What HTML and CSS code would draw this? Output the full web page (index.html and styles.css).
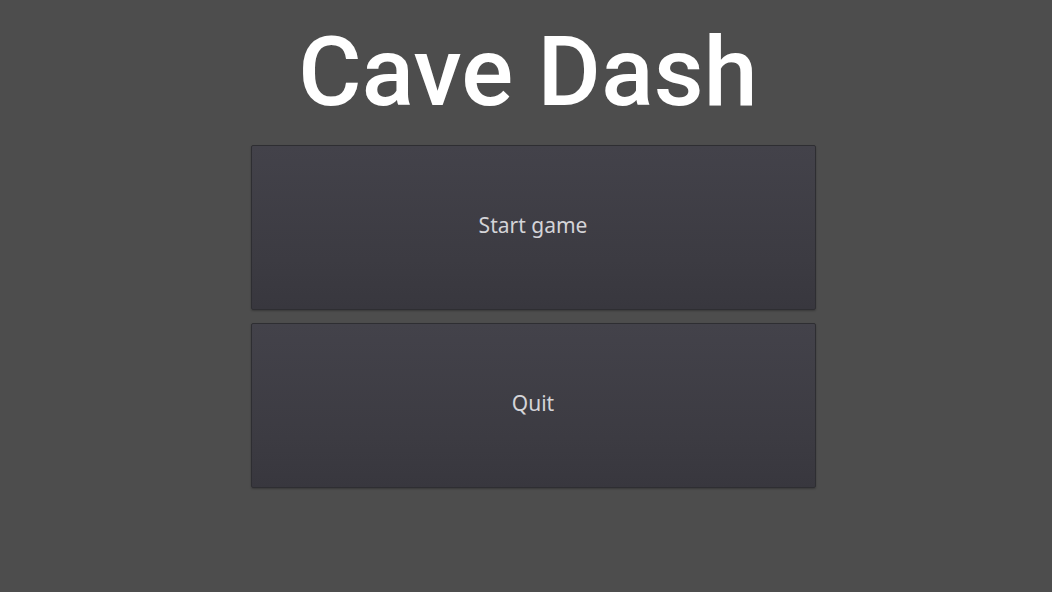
FILE: index.html
```html
<!DOCTYPE html>
<html>
<head>
<meta charset="utf-8">
<link rel="stylesheet" href="styles.css">
</head>
<body>
<main class="menu">
  <h1 class="title">Cave Dash</h1>
  <div class="buttons">
    <button class="btn">Start game</button>
    <button class="btn">Quit</button>
  </div>
</main>
</body>
</html>
```
FILE: styles.css
```css
html, body {
  margin: 0;
  padding: 0;
  width: 1052px;
  height: 592px;
  background: #4d4d4d;
  overflow: hidden;
}
.menu {
  display: flex;
  flex-direction: column;
  align-items: center;
  padding-left: 14px;
}
.title {
  margin: 15px 0 0 -10px;
  font-family: Roboto, "Liberation Sans", sans-serif;
  font-weight: 500;
  font-size: 97px;
  line-height: 114px;
  color: #ffffff;
  letter-spacing: 0.2px;
}
.buttons {
  display: flex;
  flex-direction: column;
  gap: 13px;
  margin-top: 16px;
}
.btn {
  width: 565px;
  height: 165px;
  box-sizing: border-box;
  border: 1px solid #2e2e32;
  border-radius: 2px;
  background: linear-gradient(#43424a, #3c3b42 70%, #38373e);
  box-shadow: 0 1px 2px rgba(0,0,0,0.25);
  color: #d4d4d8;
  font-family: "Noto Sans", "DejaVu Sans", sans-serif;
  font-size: 21px;
  padding: 0 0 5px 0;
  cursor: pointer;
}
```
